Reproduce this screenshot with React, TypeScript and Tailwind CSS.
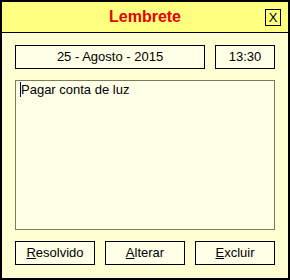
import React from "react";

export default function App() {
  const font = { fontFamily: '"Liberation Sans", Arial, sans-serif' };
  return (
    <div className="w-[290px] h-[280px] border-2 border-black bg-[#FFFFD2] flex flex-col" style={font}>
      <div className="relative h-[31px] shrink-0 bg-[#FFFF80] border-b border-black flex items-center justify-center">
        <span className="text-[16px] font-bold text-[#E80000] leading-none">Lembrete</span>
        <div className="absolute left-[263px] top-[7px] w-[16px] h-[17px] border border-black flex items-center justify-center text-[13px] leading-none text-black">
          X
        </div>
      </div>
      <div className="flex flex-col gap-[11px] pt-[12px] px-[13px] pb-[13px] flex-1">
        <div className="flex gap-[10px]">
          <div className="w-[190px] h-[24px] border border-black bg-[#FFFFE8] flex items-center justify-center text-[13px] text-black">
            25 - Agosto - 2015
          </div>
          <div className="w-[60px] h-[24px] border border-black bg-[#FFFFE8] flex items-center justify-center text-[13px] text-black">
            13:30
          </div>
        </div>
        <div className="h-[150px] border border-[#7A7A60] bg-[#FFFFE8] px-[4px] pt-[1px] text-[13px] leading-[16px] text-black">
          <span className="border-l border-[#000060]">Pagar conta de luz</span>
        </div>
        <div className="flex gap-[10px]">
          <div className="w-[80px] h-[24px] border border-black bg-[#FFFFE8] flex items-center justify-center text-[13px] text-black">
            <span><span className="underline">R</span>esolvido</span>
          </div>
          <div className="w-[80px] h-[24px] border border-black bg-[#FFFFE8] flex items-center justify-center text-[13px] text-black">
            <span><span className="underline">A</span>lterar</span>
          </div>
          <div className="w-[80px] h-[24px] border border-black bg-[#FFFFE8] flex items-center justify-center text-[13px] text-black">
            <span><span className="underline">E</span>xcluir</span>
          </div>
        </div>
      </div>
    </div>
  );
}
